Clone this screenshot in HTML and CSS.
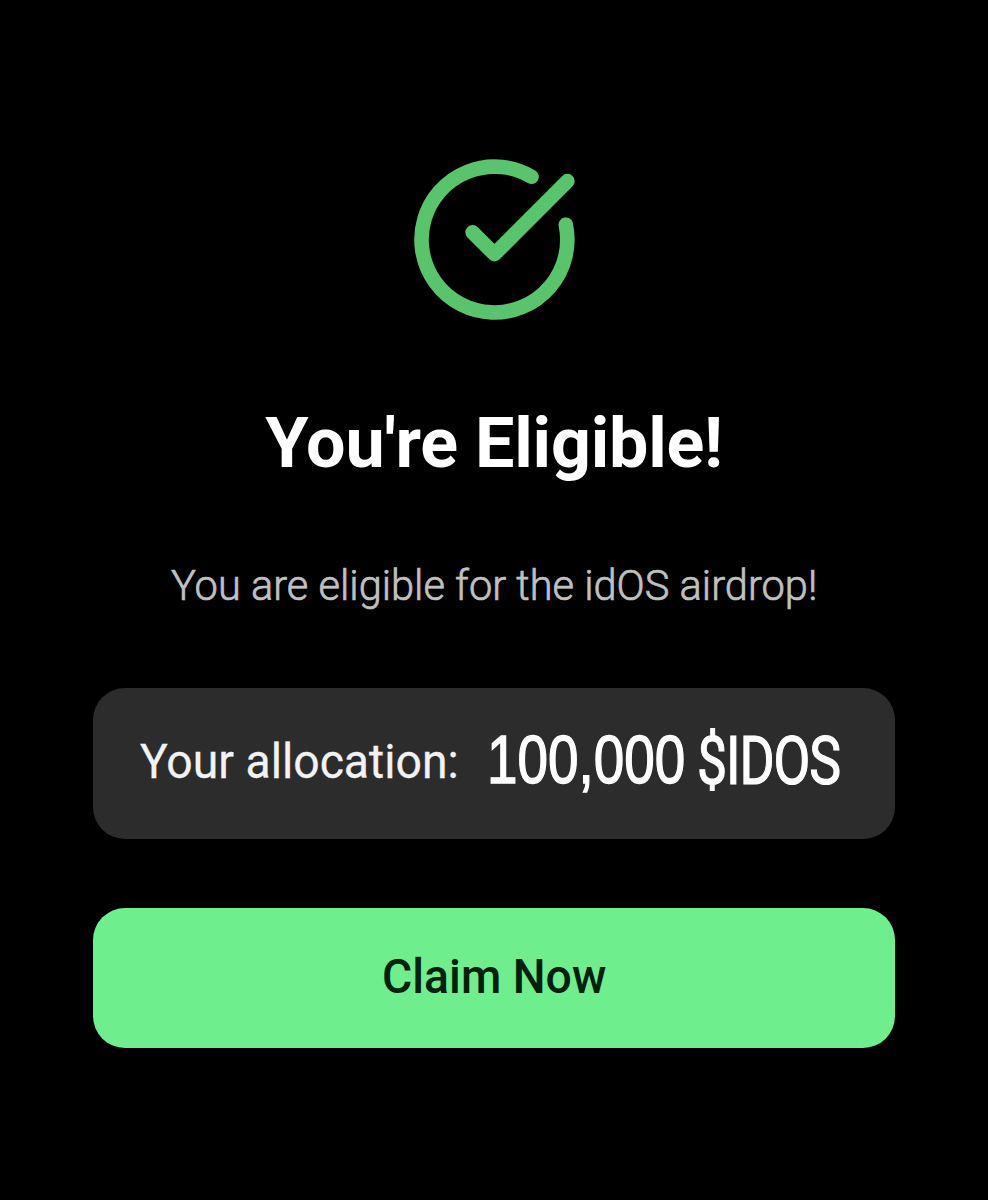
FILE: index.html
```html
<!DOCTYPE html>
<html lang="en">
  <head>
    <meta charset="utf-8" />
    <title>idOS Airdrop</title>
    <link rel="stylesheet" href="styles.css">
  </head>
  <body>
    <main class="claim">
      <svg class="check-icon" viewBox="0 0 24 24" aria-hidden="true">
        <path d="M21.78 9.97A10 10 0 1 1 17.08 3.4" />
        <polyline points="22 4 12 14.01 9 11.01" />
      </svg>
      <h1 class="title">You're Eligible!</h1>
      <p class="subtitle">You are eligible for the idOS airdrop!</p>
      <div class="allocation">
        <span class="allocation-label">Your allocation:</span>
        <div class="allocation-amount">
          <span class="number">100,000</span>
          <span class="ticker">$IDOS</span>
        </div>
      </div>
      <button class="claim-button"><span class="claim-text">Claim Now</span></button>
    </main>
  </body>
</html>
```
FILE: styles.css
```css
*{box-sizing:border-box}
body{
  margin:0;
  background:#000;
  font-family:Roboto,'Liberation Sans',sans-serif;
}
.claim{
  width:988px;
  min-height:1200px;
  padding:152px 93px 0;
  display:flex;
  flex-direction:column;
  align-items:center;
}
.check-icon{
  width:175px;
  height:175px;
  fill:none;
  stroke:#58c56c;
  stroke-width:2;
  stroke-linecap:round;
  stroke-linejoin:round;
}
.title{
  margin:76px 0 0;
  color:#fff;
  font-size:70px;
  font-weight:700;
  line-height:80px;
  letter-spacing:-.2px;
  white-space:nowrap;
}
.subtitle{
  margin:72px 0 0;
  color:#c0c0c0;
  font-size:43px;
  font-weight:300;
  line-height:60px;
  white-space:nowrap;
  transform:scaleX(.967);
  -webkit-text-stroke:.7px #c0c0c0;
}
.allocation{
  width:802px;
  height:151px;
  margin-top:73px;
  padding:0 46px 4px 47px;
  display:flex;
  align-items:center;
  justify-content:space-between;
  border-radius:32px;
  background:#2c2c2c;
}
.allocation-label{
  width:318px;
  color:#f2f2f2;
  font-size:48px;
  line-height:60px;
  white-space:nowrap;
  transform:scaleX(.965);
  transform-origin:left center;
  -webkit-text-stroke:.3px #f2f2f2;
}
.allocation-amount{
  width:362px;
  display:flex;
  color:#fff;
  line-height:80px;
}
/* condensed figures */
.number,
.ticker{
  white-space:nowrap;
  transform-origin:left center;
}
.number{
  width:210px;
  margin-top:-2px;
  font-family:'Liberation Sans',sans-serif;
  font-size:69px;
  transform:scaleX(.795);
  -webkit-text-stroke:1.4px #fff;
}
.ticker{
  width:152px;
  margin-top:-1px;
  font-size:67px;
  letter-spacing:-1.4px;
  transform:scaleX(.8);
  -webkit-text-stroke:1.2px #fff;
}
.claim-button{
  width:802px;
  height:140px;
  margin-top:69px;
  padding:0 0 4px;
  border:none;
  border-radius:32px;
  background:#6eee8d;
  color:#04200c;
  font-family:inherit;
  font-size:48px;
  font-weight:500;
}
.claim-text{
  display:inline-block;
  transform:scaleX(.965);
}
```
